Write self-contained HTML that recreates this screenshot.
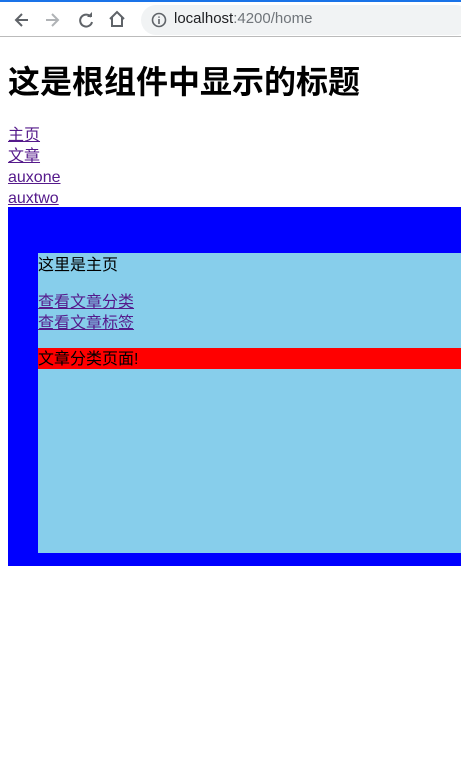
<!DOCTYPE html>
<html><head><meta charset="utf-8"><style>
*{margin:0;padding:0;box-sizing:border-box}
body{width:461px;height:761px;overflow:hidden;background:#fff;font-family:"Liberation Sans","Noto Sans CJK SC",sans-serif;font-size:16px;position:relative}
.top{position:absolute;left:0;top:0;width:461px;height:2px;background:#1a73e8}
.bar{position:absolute;left:0;top:2px;width:461px;height:35px;background:#fff;border-bottom:1px solid #bbb}
.url{position:absolute;left:141px;top:3px;width:330px;height:30px;border-radius:15px;background:#f1f3f4}
.url span{position:absolute;left:33px;top:5px;font-size:15px;color:#202124}
.url i{font-style:normal;color:#70757a}
a{color:#551a8b;text-decoration:underline}
.abs{position:absolute}
</style></head><body>
<div class="top"></div>
<div class="bar">
<svg class="abs" style="left:12px;top:8px" width="20" height="20" viewBox="0 0 20 20"><path d="M16 10H5M10 4l-6 6 6 6" stroke="#5f6368" stroke-width="2" fill="none"/></svg>
<svg class="abs" style="left:42px;top:8px" width="20" height="20" viewBox="0 0 20 20"><path d="M4 10h11M10 4l6 6-6 6" stroke="#b0b3b6" stroke-width="2" fill="none"/></svg>
<svg class="abs" style="left:76px;top:8px" width="20" height="20" viewBox="0 0 20 20"><path d="M15 7A6 6 0 1 0 16 12" stroke="#5f6368" stroke-width="2" fill="none"/><path d="M11 7h5V2z" fill="#5f6368"/></svg>
<svg class="abs" style="left:107px;top:7px" width="20" height="20" viewBox="0 0 20 20"><path d="M3 10L10 3l7 7M5 8v9h10V8" stroke="#5f6368" stroke-width="2" fill="none"/></svg>
<div class="url"><svg class="abs" style="left:10px;top:7px" width="16" height="16" viewBox="0 0 16 16"><circle cx="8" cy="8" r="6.5" stroke="#5f6368" stroke-width="1.6" fill="none"/><path d="M8 7v5M8 4.5v1.2" stroke="#5f6368" stroke-width="1.6"/></svg><span>localhost<i>:4200/home</i></span></div>
</div>
<div class="abs" style="left:8px;top:60px;font-size:32px;font-weight:bold;line-height:45px;color:#000">这是根组件中显示的标题</div>
<div class="abs" style="left:8px;top:125px;line-height:21px"><a>主页</a><br><a>文章</a><br><a>auxone</a><br><a>auxtwo</a></div>
<div class="abs" style="left:8px;top:207px;width:453px;height:359px;background:#0000ff"></div>
<div class="abs" style="left:38px;top:253px;width:423px;height:300px;background:#87ceeb"></div>
<div class="abs" style="left:38px;top:255px;line-height:21px">这里是主页</div>
<div class="abs" style="left:38px;top:292px;line-height:21px"><a>查看文章分类</a><br><a>查看文章标签</a></div>
<div class="abs" style="left:38px;top:348px;width:423px;height:21px;background:#f00;line-height:23px">文章分类页面!</div>
</body></html>
